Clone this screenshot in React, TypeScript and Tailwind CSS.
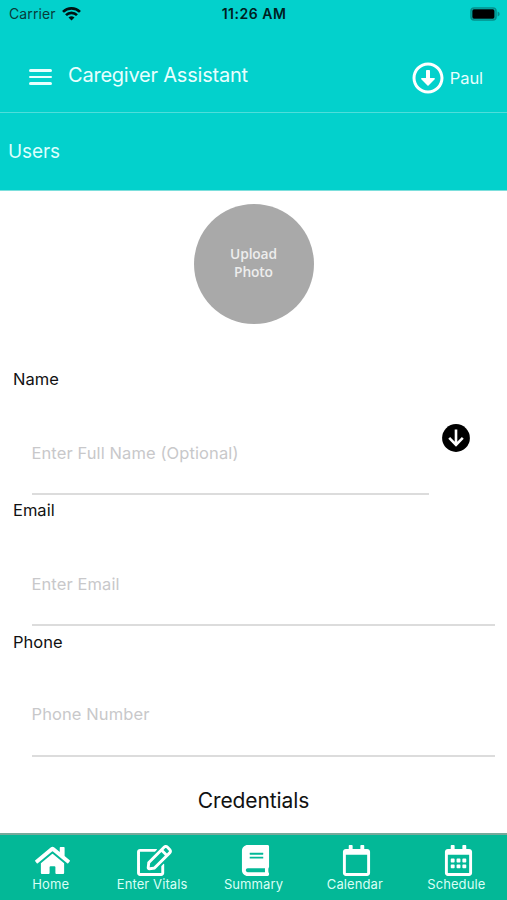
import type { ReactNode } from 'react';
import { FaBook, FaHome, FaRegArrowAltCircleDown, FaRegCalendar, FaRegCalendarAlt, FaRegEdit } from 'react-icons/fa';

function StatusBar() {
  return (
    <div className="grid h-7 grid-cols-3 items-center pr-[7px] pl-[9px] text-black">
      <div className="flex items-center gap-[6px]">
        <span className="text-[14px] leading-5 tracking-[0.1px] text-[#083c3a]">Carrier</span>
        <svg width="19" height="14" viewBox="0 0 19 14" fill="none" stroke="#001312" strokeWidth="2.7">
          <path d="M1 4.9a12.2 12.2 0 0 1 17 0" />
          <path d="M4 8.1a7.9 7.9 0 0 1 11 0" />
          <path d="M9.5 13.6 6.5 10.6a4.3 4.3 0 0 1 6 0Z" fill="#001312" stroke="none" />
        </svg>
      </div>
      <span className="-mx-1 pr-px text-center text-[14px] leading-5 font-semibold tracking-[0.5px] whitespace-nowrap text-[#00201f]">11:26 AM</span>
      <svg className="justify-self-end" width="30" height="14" viewBox="0 0 30 14">
        <rect x="1" y="1" width="25" height="12" rx="3.2" fill="none" stroke="#058f8b" strokeWidth="1.6" />
        <rect x="2.3" y="2.3" width="22.2" height="9.4" rx="1.6" fill="#000" />
        <path d="M27.6 4.5v5c1.4-.5 2-1.5 2-2.5s-.6-2-2-2.5Z" fill="#058f8b" />
      </svg>
    </div>
  );
}

function DownBadge() {
  return (
    <svg className="mt-[33px] mr-[25px] ml-[13px] size-7" viewBox="0 0 28 28" fill="none">
      <circle cx="14" cy="14" r="13.9" fill="#000" />
      <path d="M14 5.5V20.5M7.2 13.8 14 20.8l6.8-7" stroke="#fff" strokeWidth="2.6" />
    </svg>
  );
}

function Field({ label, placeholder, children, size }: { label: string; placeholder: string; children?: ReactNode; size: string }) {
  return (
    <section className="flex flex-col">
      <label className="pl-[13px] text-[16.5px] leading-6 text-[#111]">{label}</label>
      <div className="flex pr-3 pl-[31.5px]">
        <div className={`flex flex-1 flex-col justify-end border-b-2 border-[#dcdcdc] ${size}`}>
          <span className="text-[16.5px] leading-6 tracking-[0.1px] text-[#c8c8ca]">{placeholder}</span>
        </div>
        {children}
      </div>
    </section>
  );
}

const tabs = [
  { label: 'Home', icon: <FaHome className="h-[31px] w-[35px]" /> },
  { label: 'Enter Vitals', icon: <FaRegEdit className="h-[31px] w-[35px]" /> },
  { label: 'Summary', icon: <FaBook className="size-[31px]" /> },
  { label: 'Calendar', icon: <FaRegCalendar className="size-[31px]" /> },
  { label: 'Schedule', icon: <FaRegCalendarAlt className="size-[31px]" /> },
];

export default function App() {
  return (
    <div className="flex h-[900px] w-full flex-col overflow-hidden bg-white font-['Inter',sans-serif]">
      <header className="bg-[#03d1cc] text-white">
        <StatusBar />
        <div className="flex h-[85px] items-start border-b border-[#4fdedb] pr-6 pl-[29px]">
          <div className="mt-[41px] flex w-[23px] flex-col gap-[4px]">
            <span className="h-[2.5px] rounded-full bg-[#e8fffe]" />
            <span className="h-[2.5px] rounded-full bg-[#e8fffe]" />
            <span className="h-[2.5px] rounded-full bg-[#e8fffe]" />
          </div>
          <h1 className="mt-[33px] ml-4 flex-1 text-[20px] leading-7 tracking-[-0.22px] text-[#e8fffe]">Caregiver Assistant</h1>
          <FaRegArrowAltCircleDown className="mt-[34px] size-8" />
          <span className="mt-[38px] ml-[6px] text-[16.5px] leading-6 tracking-[-0.1px] text-[#e8fffe]">Paul</span>
        </div>
        <h2 className="h-[78px] border-b border-[#7cdfdc] pt-[25px] pl-[8px] text-[19px] leading-7 tracking-[-0.1px] text-[#dcfffd]">Users</h2>
      </header>
      <main className="flex flex-1 flex-col">
        <div className="mt-[13px] flex size-[120px] flex-col items-center justify-center self-center rounded-full bg-[#a9a9a9] pb-[3px] font-['Open_Sans',sans-serif] text-[13.8px] leading-[18px] font-semibold tracking-[-0.15px] text-[#ededed]">
          <span>Upload</span>
          <span>Photo</span>
        </div>
        <div className="mt-[43px] flex flex-col gap-[3px]">
          <Field label="Name" placeholder="Enter Full Name (Optional)" size="h-[104px] pb-[28px]">
            <DownBadge />
          </Field>
          <Field label="Email" placeholder="Enter Email" size="h-[104px] pb-[28px]" />
          <div className="pt-px">
            <Field label="Phone" placeholder="Phone Number" size="h-[103px] pb-[29px]" />
          </div>
        </div>
        <h3 className="mt-[28px] text-center text-[21px] leading-8 tracking-[-0.1px] text-[#111]">Credentials</h3>
      </main>
      <nav className="grid h-[67px] grid-cols-5 border-t-2 border-[#77a99b] bg-[#03b897] text-white">
        {tabs.map((tab) => (
          <div key={tab.label} className="flex flex-col items-center pt-[9px]">
            <div className="flex h-8 items-center pl-[4px]">{tab.icon}</div>
            <span className="text-[13px] leading-4 tracking-[0.1px] whitespace-nowrap text-[#d9fff5]">{tab.label}</span>
          </div>
        ))}
      </nav>
    </div>
  );
}
